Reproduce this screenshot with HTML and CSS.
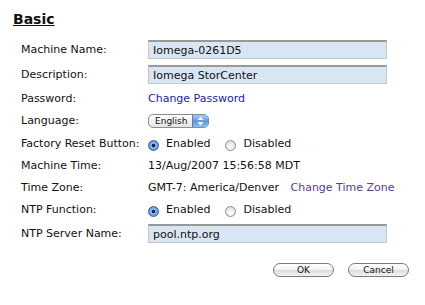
FILE: index.html
```html
<!DOCTYPE html>
<html lang="en">

<head>
    <meta charset="UTF-8">
    <title>Basic</title>
    <link rel="stylesheet" href="styles.css">
</head>

<body>
    <h2 class="section-title">Basic</h2>
    <form class="settings">
        <div class="row row-input">
            <label>Machine Name:</label>
            <input type="text" class="text-field" value="Iomega-0261D5">
        </div>
        <div class="row row-input">
            <label>Description:</label>
            <input type="text" class="text-field" value="Iomega StorCenter">
        </div>
        <div class="row row-short">
            <label>Password:</label>
            <a href="#" class="link">Change Password</a>
        </div>
        <div class="row">
            <label>Language:</label>
            <div class="popup-select">
                <span class="popup-value">English</span>
                <span class="popup-arrows">
                    <svg width="7" height="10" viewBox="0 0 7 10">
                        <path d="M3.5 0.5 L6.5 4 L0.5 4 Z" fill="#fff" />
                        <path d="M3.5 9.5 L6.5 6 L0.5 6 Z" fill="#fff" />
                    </svg>
                </span>
            </div>
        </div>
        <div class="row">
            <label>Factory Reset Button:</label>
            <div class="radio-group">
                <input type="radio" name="reset" class="radio" checked><span class="radio-text">Enabled</span>
                <input type="radio" name="reset" class="radio"><span class="radio-text">Disabled</span>
            </div>
        </div>
        <div class="row row-tight">
            <label>Machine Time:</label>
            <span>13/Aug/2007 15:56:58 MDT</span>
        </div>
        <div class="row row-short">
            <label>Time Zone:</label>
            <span>GMT-7: America/Denver <a href="#" class="link visited">Change Time Zone</a></span>
        </div>
        <div class="row">
            <label>NTP Function:</label>
            <div class="radio-group">
                <input type="radio" name="ntp" class="radio" checked><span class="radio-text">Enabled</span>
                <input type="radio" name="ntp" class="radio"><span class="radio-text">Disabled</span>
            </div>
        </div>
        <div class="row row-input">
            <label>NTP Server Name:</label>
            <input type="text" class="text-field" value="pool.ntp.org">
        </div>
        <div class="actions">
            <button type="button" class="pill-button">OK</button>
            <button type="button" class="pill-button">Cancel</button>
        </div>
    </form>
</body>

</html>
```

FILE: styles.css
```css
body {
    font-family: 'DejaVu Sans', Verdana, sans-serif;
    font-size: 11px;
    color: #111;
    background-color: #fff;
    margin: 0;
    padding: 0;
}

.section-title {
    font-size: 14px;
    font-weight: bold;
    text-decoration: underline;
    margin: 0;
    padding: 11px 0 0 13px;
    height: 37px;
    line-height: 17px;
    box-sizing: border-box;
}

.settings {
    padding-left: 21px;
}

.row {
    display: grid;
    grid-template-columns: 127px 1fr;
    align-items: center;
    height: 23px;
}

.row-input {
    height: 25px;
}

.row-short {
    height: 22px;
}

.row-tight {
    height: 21px;
}

.row label {
    white-space: nowrap;
}

.text-field {
    width: 239px;
    height: 19px;
    box-sizing: border-box;
    margin: 0;
    padding: 0 4px;
    font-family: 'DejaVu Sans', Verdana, sans-serif;
    font-size: 11px;
    color: #111;
    background-color: #d8e5f3;
    border: 1px solid #c6c6c6;
    border-top: 2px solid #9a9a9a;
}

.link {
    color: #23239b;
    text-decoration: none;
}

.link.visited {
    color: #5b3b8f;
    margin-left: 8px;
}

.popup-select {
    display: flex;
    align-items: stretch;
    width: 61px;
    height: 14px;
    box-sizing: border-box;
    border: 1px solid #8c8c8c;
    border-radius: 5px;
    overflow: hidden;
    background: linear-gradient(#ffffff, #e4e4e4);
    font-size: 9px;
}

.popup-value {
    flex: 1;
    padding-left: 6px;
    line-height: 12px;
}

.popup-arrows {
    width: 15px;
    display: flex;
    align-items: center;
    justify-content: center;
    background: linear-gradient(#a5cdf6, #5b98e4 55%, #8ec0f4);
    border-left: 1px solid #5a7cae;
}

.radio-group {
    display: flex;
    align-items: center;
}

.radio {
    appearance: none;
    -webkit-appearance: none;
    width: 11px;
    height: 11px;
    margin: 3px 7px 0 0;
    border: 1px solid #8d8d8d;
    border-radius: 50%;
    background: radial-gradient(circle at 50% 70%, #ffffff, #d6d6d6);
    box-sizing: border-box;
}

.radio:checked {
    border-color: #3d5f92;
    background: radial-gradient(circle, #1d2a44 0, #1d2a44 1.6px, #8fc0f4 2.2px, #4e8ddc 5px);
}

.radio-text {
    margin-right: 15px;
}

.actions {
    display: flex;
    justify-content: flex-end;
    gap: 14px;
    width: 388px;
    margin-top: 17px;
}

.pill-button {
    width: 61px;
    height: 14px;
    padding: 0;
    border: 1px solid #7a7a7a;
    border-radius: 7px;
    background: linear-gradient(#ffffff, #f2f2f2 50%, #dcdcdc 51%, #f4f4f4);
    font-family: 'DejaVu Sans', Verdana, sans-serif;
    font-size: 9px;
    line-height: 12px;
    color: #111;
}
```
